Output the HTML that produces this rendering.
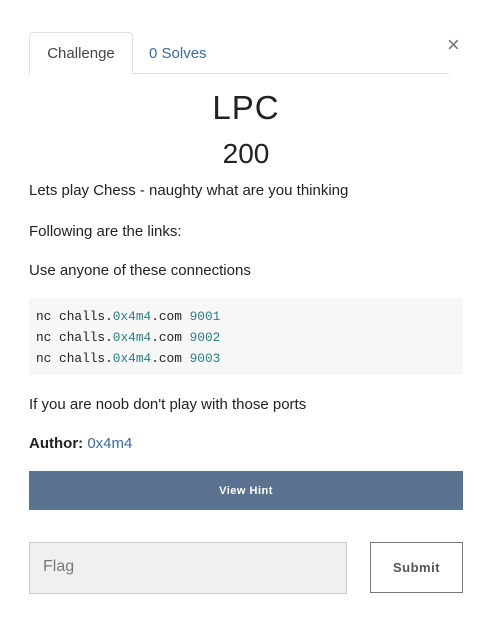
<!DOCTYPE html>
<html><head><meta charset="utf-8"><style>
body{margin:0;width:492px;height:640px;background:#fff;font-family:"Liberation Sans",sans-serif;color:#222;position:relative;overflow:hidden}
.a{position:absolute}
.t{font-size:15px;left:29px;white-space:nowrap}
</style></head><body>
<div class="a" style="left:29px;top:32px;width:102px;height:41px;border:1px solid #dee2e6;border-bottom:none;border-radius:4px 4px 0 0;background:#fff;z-index:2"></div>
<div class="a" style="left:29px;top:73px;width:420px;height:1px;background:#dee2e6"></div>
<div class="a" style="left:29px;top:45px;width:104px;text-align:center;font-size:15px;color:#444;z-index:3">Challenge</div>
<div class="a" style="left:149px;top:45px;font-size:15px;color:#3a6aa0">0 Solves</div>
<div class="a" style="left:447px;top:32px;font-size:22px;color:#777">×</div>
<div class="a" style="left:0;width:492px;top:89px;text-align:center;font-size:33px;color:#222;letter-spacing:1px">LPC</div>
<div class="a" style="left:0;width:492px;top:138px;text-align:center;font-size:28px;color:#222">200</div>
<div class="a t" style="top:182px">Lets play Chess - naughty what are you thinking</div>
<div class="a t" style="top:223px">Following are the links:</div>
<div class="a t" style="top:262px">Use anyone of these connections</div>
<div class="a" style="left:29px;top:298px;width:434px;height:77px;background:#f7f7f7"></div>
<div class="a" style="left:36px;top:306px;font-family:'Liberation Mono',monospace;font-size:12.8px;line-height:21px;color:#222;white-space:pre">nc challs.<span style="color:#2a8080">0x4m4</span>.com <span style="color:#2a8080">9001</span>
nc challs.<span style="color:#2a8080">0x4m4</span>.com <span style="color:#2a8080">9002</span>
nc challs.<span style="color:#2a8080">0x4m4</span>.com <span style="color:#2a8080">9003</span></div>
<div class="a t" style="top:396px">If you are noob don't play with those ports</div>
<div class="a t" style="top:435px"><b>Author:</b> <span style="color:#3a6aa0">0x4m4</span></div>
<div class="a" style="left:29px;top:471px;width:434px;height:39px;background:#5b7290;color:#fff;font-size:11px;font-weight:bold;text-align:center;line-height:40px;letter-spacing:.5px">View Hint</div>
<div class="a" style="left:29px;top:542px;width:316px;height:50px;background:#f0f0f0;border:1px solid #ccc"></div>
<div class="a" style="left:43px;top:558px;font-size:16px;color:#777">Flag</div>
<div class="a" style="left:370px;top:542px;width:91px;height:49px;border:1px solid #777;text-align:center;line-height:49px;font-size:13px;font-weight:bold;color:#555;letter-spacing:.5px">Submit</div>
</body></html>
